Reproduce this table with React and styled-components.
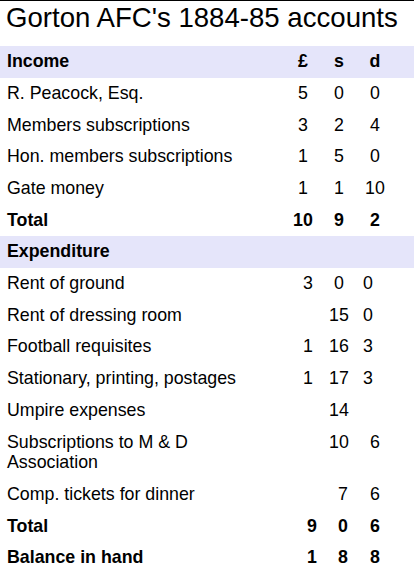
import styled, { createGlobalStyle } from "styled-components";

const GlobalStyle = createGlobalStyle`
  body {
    margin: 0;
    background: #fff;
    font-family: "Liberation Sans", Arial, sans-serif;
    color: #000;
  }
`;

const Page = styled.div`
  width: 414px;
  border-top: 1px solid #000;
`;

const Title = styled.h1`
  margin: 0 0 11px;
  padding: 0 6px;
  font-size: 27.6px;
  font-weight: normal;
  line-height: 34px;
  white-space: nowrap;
`;

const Row = styled.div`
  display: grid;
  grid-template-columns: 1fr repeat(3, 36px);
  padding-right: 21px;
  align-items: start;
  background: ${(p) => (p.$band ? "#e5e5fa" : "transparent")};
  font-weight: ${(p) => (p.$bold ? "bold" : "normal")};
  font-size: 17.8px;
  line-height: 20.8px;
`;

const Label = styled.div`
  padding: 5.45px 16px 5.45px 7px;
`;

const Num = styled.div`
  padding-top: 5.45px;
  padding-bottom: 5.45px;
  text-align: ${(p) => p.$align || "center"};
  padding-left: ${(p) => (p.$align === "left" ? p.$inset : 0)}px;
  padding-right: ${(p) => (p.$align === "right" ? p.$inset : 0)}px;
  white-space: nowrap;
`;

// each cell: [value, align, inset]
const c = (v) => [v, "center", 0];
const r = (v, inset) => [v, "right", inset];
const l = (v, inset) => [v, "left", inset];

const rows = [
  { label: "Income", band: true, bold: true, cells: [c("£"), c("s"), c("d")] },
  { label: "R. Peacock, Esq.", cells: [c("5"), c("0"), c("0")] },
  { label: "Members subscriptions", cells: [c("3"), c("2"), c("4")] },
  { label: "Hon. members subscriptions", cells: [c("1"), c("5"), c("0")] },
  { label: "Gate money", cells: [c("1"), c("1"), c("10")] },
  { label: "Total", bold: true, cells: [c("10"), c("9"), c("2")] },
  { label: "Expenditure", band: true, bold: true, cells: [c(""), c(""), c("")] },
  { label: "Rent of ground", cells: [r("3", 8), c("0"), l("0", 6)] },
  { label: "Rent of dressing room", cells: [c(""), c("15"), l("0", 6)] },
  { label: "Football requisites", cells: [r("1", 8), c("16"), l("3", 6)] },
  { label: "Stationary, printing, postages", cells: [r("1", 8), c("17"), l("3", 6)] },
  { label: "Umpire expenses", cells: [c(""), c("14"), c("")] },
  { label: "Subscriptions to M & D Association", cells: [c(""), c("10"), c("6")] },
  { label: "Comp. tickets for dinner", cells: [c(""), r("7", 9), c("6")] },
  { label: "Total", bold: true, cells: [r("9", 4), r("0", 9), c("6")] },
  { label: "Balance in hand", bold: true, cells: [r("1", 4), r("8", 9), c("8")] },
];

export default function App() {
  return (
    <>
      <GlobalStyle />
      <Page>
        <Title>Gorton AFC's 1884-85 accounts</Title>
        {rows.map((row, i) => (
          <Row key={i} $band={row.band} $bold={row.bold}>
            <Label>{row.label}</Label>
            {row.cells.map(([v, align, inset], j) => (
              <Num key={j} $align={align} $inset={inset}>
                {v}
              </Num>
            ))}
          </Row>
        ))}
      </Page>
    </>
  );
}
